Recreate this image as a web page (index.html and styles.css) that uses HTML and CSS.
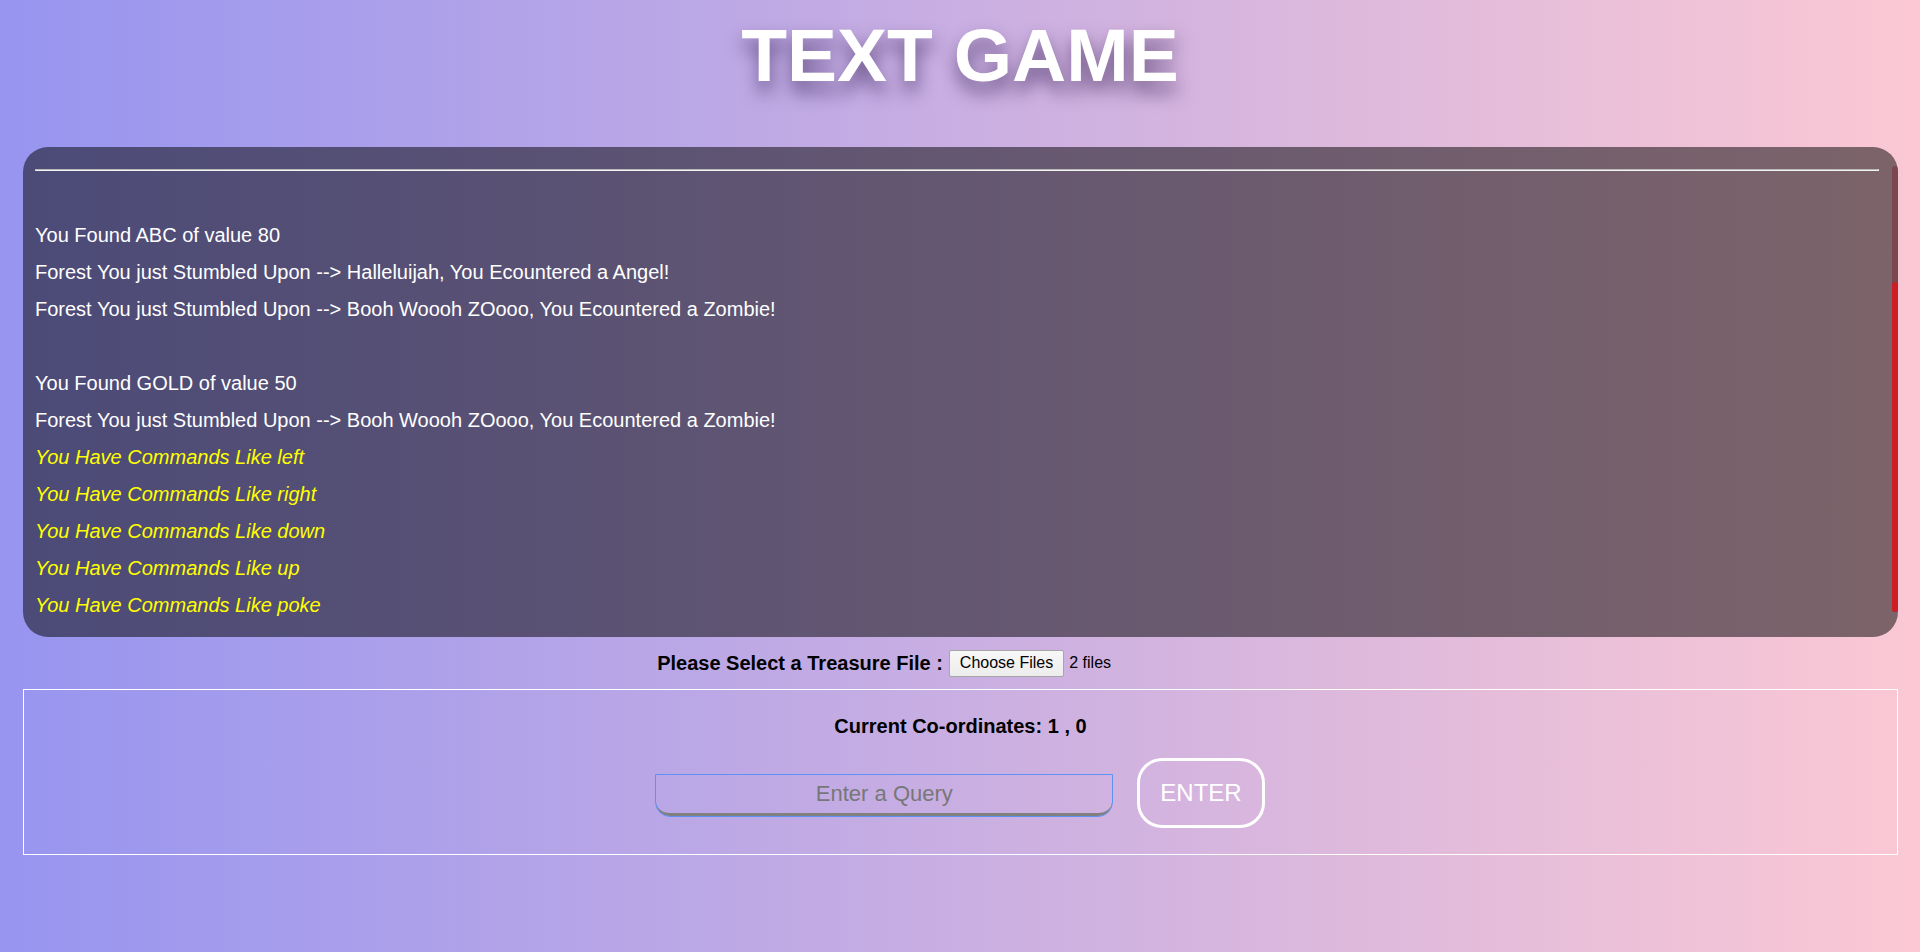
FILE: index.html
```html
<!DOCTYPE html>
<html lang="en">
<head>
<meta charset="utf-8">
<title>Text Game</title>
<link rel="stylesheet" href="styles.css">
</head>
<body>
<header class="title-bar">
  <h1 class="title">TEXT GAME</h1>
</header>
<main class="main">
  <section class="panel">
    <div class="log">
      <hr class="log-rule">
      <div class="line">&nbsp;</div>
      <div class="line">You Found ABC of value 80</div>
      <div class="line">Forest You just Stumbled Upon --&gt; Halleluijah, You Ecountered a Angel!</div>
      <div class="line">Forest You just Stumbled Upon --&gt; Booh Woooh ZOooo, You Ecountered a Zombie!</div>
      <div class="line">&nbsp;</div>
      <div class="line">You Found GOLD of value 50</div>
      <div class="line">Forest You just Stumbled Upon --&gt; Booh Woooh ZOooo, You Ecountered a Zombie!</div>
      <div class="line hint">You Have Commands Like left</div>
      <div class="line hint">You Have Commands Like right</div>
      <div class="line hint">You Have Commands Like down</div>
      <div class="line hint">You Have Commands Like up</div>
      <div class="line hint">You Have Commands Like poke</div>
    </div>
    <div class="scroll-track"><div class="scroll-thumb"></div></div>
  </section>

  <div class="file-row">
    <span class="file-label">Please Select a Treasure File :</span>
    <span class="file-input">
      <button class="file-button" type="button">Choose Files</button>
      <span class="file-count">2 files</span>
    </span>
  </div>

  <section class="control-box">
    <div class="coords">Current Co-ordinates: 1 , 0</div>
    <div class="query-row">
      <input class="query" type="text" placeholder="Enter a Query">
      <button class="enter" type="button">ENTER</button>
    </div>
  </section>
</main>
</body>
</html>
```
FILE: styles.css
```css
html, body {
  margin: 0;
  padding: 0;
}

body {
  min-height: 952px;
  background: linear-gradient(to right, #9795f0, #fbc8d4);
  font-family: "Liberation Sans", Arial, sans-serif;
  color: #000;
}

.title-bar {
  display: flex;
  justify-content: center;
  padding-top: 10px;
}

.title {
  margin: 0;
  font-size: 75px;
  line-height: 90px;
  font-weight: bold;
  color: #fff;
  text-shadow: 1px 11px 18px rgba(40, 20, 70, 0.6);
}

.main {
  padding: 47px 22px 0 23px;
}

.panel {
  display: flex;
  height: 490px;
  border-radius: 25px;
  background: rgba(0, 0, 0, 0.5);
  overflow: hidden;
}

.log {
  flex: 1;
  padding: 14px 13px 13px 12px;
  overflow: hidden;
  color: #fff;
  font-size: 20px;
}

.log-rule {
  margin: 8px 0 9px;
  height: 0;
  border-style: solid;
  border-width: 1px;
  border-color: #b9b9b9 #f2f2f2 #f2f2f2 #b9b9b9;
}

.line {
  line-height: 37px;
  white-space: nowrap;
}

.hint {
  color: #ffff00;
  font-style: italic;
}

.scroll-track {
  width: 6px;
  margin: 19px 0 25px;
  display: flex;
  flex-direction: column;
  background: #7a4650;
  border-radius: 3px;
}

.scroll-thumb {
  margin-top: auto;
  height: 330px;
  background: #cc1f25;
  border-radius: 3px;
}

.file-row {
  display: flex;
  justify-content: center;
  align-items: center;
  height: 26px;
  margin: 13px 0;
}

.file-label {
  font-size: 20px;
  font-weight: bold;
  margin-right: 6px;
}

.file-input {
  display: inline-flex;
  align-items: center;
  width: 315px;
  font-size: 16px;
}

.file-button {
  font-family: "Liberation Sans", Arial, sans-serif;
  font-size: 16px;
  line-height: 18px;
  padding: 3px 10px 4px;
  color: #000;
  background: linear-gradient(#f8f8f8, #ececec);
  border: 1px solid #a6a6a6;
  border-radius: 2px;
}

.file-count {
  margin-left: 5px;
}

.control-box {
  border: 1px solid #fff;
  padding: 25px 0 26px;
}

.coords {
  text-align: center;
  font-size: 20px;
  font-weight: bold;
  line-height: 23px;
}

.query-row {
  display: flex;
  justify-content: center;
  align-items: baseline;
  gap: 25px;
  margin-top: 20px;
}

.query {
  box-sizing: border-box;
  width: 456px;
  height: 41px;
  padding: 0;
  border: none;
  border-bottom: 3px solid #808080;
  border-radius: 0 0 14px 14px;
  outline: 1px solid #5f90f5;
  background: transparent;
  font-family: "Liberation Sans", Arial, sans-serif;
  font-size: 22px;
  text-align: center;
  color: #333;
}

.query::placeholder {
  color: #777;
}

.enter {
  box-sizing: border-box;
  height: 70px;
  padding: 18px 20px;
  border: 3px solid #fff;
  border-radius: 25px;
  background: transparent;
  color: #fff;
  font-family: "Liberation Sans", Arial, sans-serif;
  font-size: 24px;
  line-height: 28px;
}
```
